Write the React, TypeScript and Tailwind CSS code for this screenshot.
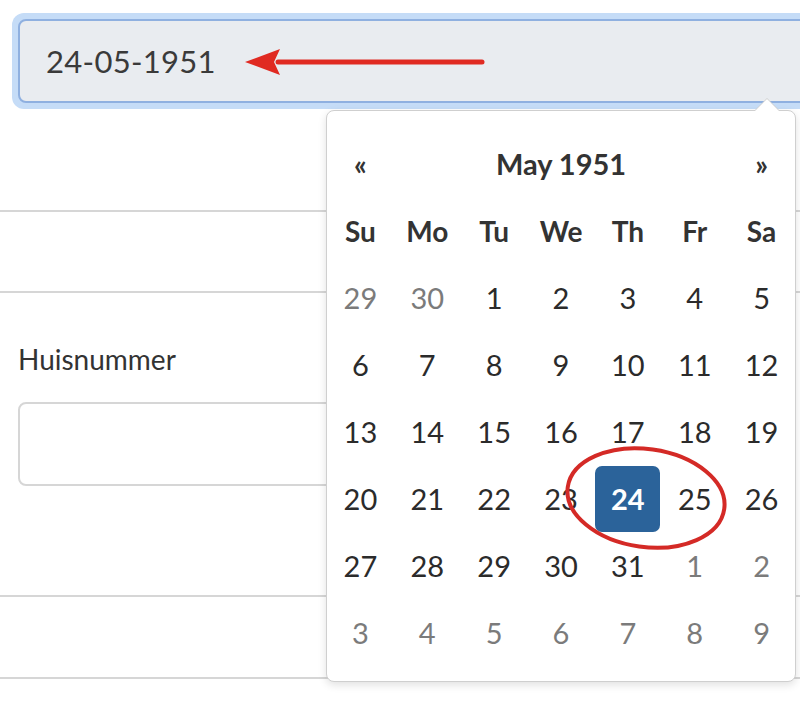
import React from 'react';

const font = { fontFamily: 'Lato, "Open Sans", sans-serif' };

type Day = { n: number; muted?: boolean; active?: boolean };

const weeks: Day[][] = [
  [{ n: 29, muted: true }, { n: 30, muted: true }, { n: 1 }, { n: 2 }, { n: 3 }, { n: 4 }, { n: 5 }],
  [{ n: 6 }, { n: 7 }, { n: 8 }, { n: 9 }, { n: 10 }, { n: 11 }, { n: 12 }],
  [{ n: 13 }, { n: 14 }, { n: 15 }, { n: 16 }, { n: 17 }, { n: 18 }, { n: 19 }],
  [{ n: 20 }, { n: 21 }, { n: 22 }, { n: 23 }, { n: 24, active: true }, { n: 25 }, { n: 26 }],
  [{ n: 27 }, { n: 28 }, { n: 29 }, { n: 30 }, { n: 31 }, { n: 1, muted: true }, { n: 2, muted: true }],
  [3, 4, 5, 6, 7, 8, 9].map((n) => ({ n, muted: true })),
];

const dayNames = ['Su', 'Mo', 'Tu', 'We', 'Th', 'Fr', 'Sa'];

const DatePicker: React.FC = () => (
  <div className="absolute left-[326px] top-[110px] w-[470px] h-[572px] bg-white border border-[#cfcfcf] rounded-[8px] shadow-[0_3px_8px_rgba(0,0,0,0.12)] pt-[19px]">
    {/* caret */}
    <div className="absolute -top-[13px] left-[427px] w-0 h-0 border-l-[13px] border-r-[13px] border-b-[13px] border-l-transparent border-r-transparent border-b-[#cfcfcf]" />
    <div className="absolute -top-[12px] left-[428px] w-0 h-0 border-l-[12px] border-r-[12px] border-b-[12px] border-l-transparent border-r-transparent border-b-white" />

    <div className="grid grid-cols-7 text-[#333]">
      <div className="h-[67px] flex items-center justify-center text-[28px] font-bold">«</div>
      <div className="col-span-5 h-[67px] flex items-center justify-center text-[29px] font-bold">May 1951</div>
      <div className="h-[67px] flex items-center justify-center text-[28px] font-bold">»</div>
      {dayNames.map((d) => (
        <div key={d} className="h-[67px] flex items-center justify-center text-[28px] font-bold">
          {d}
        </div>
      ))}
      {weeks.flat().map((d, i) => (
        <div key={i} className="h-[67px] flex items-center justify-center">
          {d.active ? (
            <div className="w-[65px] h-[66px] rounded-[7px] bg-[#2b639a] text-white font-bold text-[29px] flex items-center justify-center">
              {d.n}
            </div>
          ) : (
            <span className={`text-[29px] ${d.muted ? 'text-[#7b7b7b]' : 'text-[#2b2b2b]'}`}>{d.n}</span>
          )}
        </div>
      ))}
    </div>

    {/* annotation ellipse */}
    <svg className="absolute left-[230px] top-[330px]" width="180" height="120" viewBox="0 0 180 120">
      <ellipse cx="89" cy="57" rx="79" ry="49" transform="rotate(8 89 57)" fill="none" stroke="#d42a26" strokeWidth="4" />
    </svg>
  </div>
);

export default function App() {
  return (
    <div className="relative w-[800px] h-[702px] overflow-hidden bg-white" style={font}>
      <div className="pt-[13px] pl-[12px]">
        <div className="relative w-[820px] h-[96px] rounded-[12px] bg-[#c5dcf7] p-[6px]">
          <div className="h-full rounded-[8px] border-2 border-[#8fb0e0] bg-[#e9ecf0] flex items-center pl-[26px]">
            <span className="text-[31px] text-[#3a3a3a] tracking-[0.3px]">24-05-1951</span>
          </div>
          <svg className="absolute left-[230px] top-[33px]" width="262" height="34" viewBox="0 0 262 34">
            <line x1="36" y1="16" x2="240" y2="16" stroke="#e02a22" strokeWidth="5" strokeLinecap="round" />
            <polygon points="3,16 38,3 32,16 38,29" fill="#e02a22" />
          </svg>
        </div>
      </div>

      <div className="mt-[101px] h-[83px] border-y-2 border-[#d6d6d6]" />

      <div className="pl-[18px] pt-[52px] text-[28px] text-[#333] leading-none">Huisnummer</div>
      <div className="ml-[18px] mt-[29px] w-[400px] h-[84px] rounded-[8px] border-2 border-[#d6d6d6]" />

      <div className="mt-[109px] h-[84px] border-y-2 border-[#d6d6d6]" />

      <DatePicker />
    </div>
  );
}
